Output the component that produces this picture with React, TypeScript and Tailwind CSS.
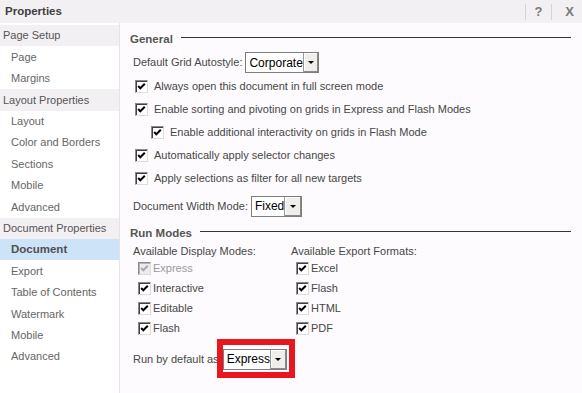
import React from "react";

const FONT = { fontFamily: '"Liberation Sans", Arial, sans-serif' };

const SIDEBAR = [
  { label: "Page Setup", group: true },
  { label: "Page" },
  { label: "Margins" },
  { label: "Layout Properties", group: true },
  { label: "Layout" },
  { label: "Color and Borders" },
  { label: "Sections" },
  { label: "Mobile" },
  { label: "Advanced" },
  { label: "Document Properties", group: true },
  { label: "Document", active: true },
  { label: "Export" },
  { label: "Table of Contents" },
  { label: "Watermark" },
  { label: "Mobile" },
  { label: "Advanced" },
];

function Check({ checked = true, disabled = false }: { checked?: boolean; disabled?: boolean }) {
  return (
    <span
      className={
        "relative w-[13px] h-[13px] shrink-0 border border-t-[#8a8a8a] border-l-[#8a8a8a] border-r-[#dcdcdc] border-b-[#dcdcdc] " +
        (disabled ? "bg-[#ececec] shadow-[inset_1px_1px_0_#b4b4b4]" : "bg-white shadow-[inset_1px_1px_0_#404040]")
      }
    >
      {checked && (
        <svg viewBox="0 0 11 11" className="absolute left-0 top-0 w-[11px] h-[11px]">
          <polyline
            points="2.2,5 4.3,7.3 8.8,2.8"
            fill="none"
            stroke={disabled ? "#a8a8a8" : "#000"}
            strokeWidth="2"
          />
        </svg>
      )}
    </span>
  );
}

function CheckRow({ label, indent = false }: { label: string; indent?: boolean }) {
  return (
    <div className={"h-[23px] flex items-center gap-[6px] " + (indent ? "pl-[18px]" : "pl-[2px]")}>
      <Check />
      <span>{label}</span>
    </div>
  );
}

function SmallCheck({ label, disabled = false }: { label: string; disabled?: boolean }) {
  return (
    <div className="h-[20px] flex items-center gap-[2px]">
      <Check disabled={disabled} />
      <span className={disabled ? "text-[#9a9a9a]" : ""}>{label}</span>
    </div>
  );
}

function Dropdown({ value, w, btn = "w-[21px]" }: { value: string; w: string; btn?: string }) {
  return (
    <div className={"flex h-[21px] border border-[#7d7d7d] bg-white " + w}>
      <span className="flex-1 flex items-center pl-[3px] text-[12px] text-black whitespace-nowrap">{value}</span>
      <span className={"flex items-center justify-center bg-[#efeeea] border-l border-[#9a9a9a] shadow-[inset_-1px_-1px_0_#8a8a8a,inset_1px_1px_0_#fff] " + btn}>
        <span className="w-0 h-0 border-l-[3px] border-r-[3px] border-t-[3px] border-l-transparent border-r-transparent border-t-black" />
      </span>
    </div>
  );
}

function Heading({ title }: { title: string }) {
  return (
    <div className="h-[20px] flex items-center gap-[8px] -ml-[3px]">
      <span className="font-bold text-[#555] text-[11.5px]">{title}</span>
      <span className="flex-1 h-px bg-[#333] mb-[6px] mr-[11px]" />
    </div>
  );
}

export default function App() {
  return (
    <div style={FONT} className="w-[582px] h-[393px] flex flex-col bg-[#f3f0f3] text-[11px] overflow-hidden">
      {/* title bar */}
      <div className="h-[23px] flex items-center justify-between pl-[5px] pr-[8px]">
        <span className="font-bold text-[11.5px] text-[#3e3e3e]">Properties</span>
        <div className="flex items-center h-[16px] text-[#7a7a7a] font-bold text-[13px]">
          <span className="w-px h-[16px] bg-[#d6d4d6]" />
          <span className="w-[25px] text-center">?</span>
          <span className="w-px h-[16px] bg-[#d6d4d6]" />
          <span className="w-[22px] text-right">X</span>
        </div>
      </div>

      <div className="flex flex-1">
        {/* sidebar */}
        <div className="w-[119px] flex flex-col pt-[2px] bg-white">
          {SIDEBAR.map((s, i) => (
            <div
              key={i}
              className={
                "h-[21.4px] flex items-center whitespace-nowrap " +
                (s.group
                  ? "pl-[3px] bg-[#f3f0f3] text-[#555]"
                  : s.active
                  ? "pl-[11px] bg-[#cde3f8] text-[#505050] font-bold text-[11.5px]"
                  : "pl-[11px] text-[#666]")
              }
            >
              {s.label}
            </div>
          ))}
          <div className="flex-1" />
        </div>

        {/* content */}
        <div className="relative flex-1 bg-[#fdfbfd] border-l border-[#e6e3e6] pl-[13px] pt-[7px] text-[#474747]">
          <Heading title="General" />
          <div className="h-[25px] flex items-center gap-[3px]">
            <span>Default Grid Autostyle:</span>
            <Dropdown value="Corporate" w="w-[74px]" />
          </div>
          <CheckRow label="Always open this document in full screen mode" />
          <CheckRow label="Enable sorting and pivoting on grids in Express and Flash Modes" />
          <CheckRow label="Enable additional interactivity on grids in Flash Mode" indent />
          <CheckRow label="Automatically apply selector changes" />
          <CheckRow label="Apply selections as filter for all new targets" />
          <div className="h-[22px] mt-[5px] flex items-center gap-[3px]">
            <span>Document Width Mode:</span>
            <Dropdown value="Fixed" w="w-[51px]" />
          </div>

          <div className="mt-[7px]">
            <Heading title="Run Modes" />
          </div>
          <div className="flex">
            <div className="w-[158px]">
              <div className="h-[14px] flex items-center">Available Display Modes:</div>
              <div className="pl-[5px]">
                <SmallCheck label="Express" disabled />
                <SmallCheck label="Interactive" />
                <SmallCheck label="Editable" />
                <SmallCheck label="Flash" />
              </div>
            </div>
            <div>
              <div className="h-[14px] flex items-center">Available Export Formats:</div>
              <div className="pl-[5px]">
                <SmallCheck label="Excel" />
                <SmallCheck label="Flash" />
                <SmallCheck label="HTML" />
                <SmallCheck label="PDF" />
              </div>
            </div>
          </div>

          <div className="h-[24px] mt-[9px] flex items-center gap-[4px]">
            <span>Run by default as</span>
            <Dropdown value="Express" w="w-[64px]" btn="w-[18px]" />
          </div>
          {/* red annotation box */}
          <div className="absolute left-[97px] top-[316px] w-[78px] h-[39px] border-[6px] border-[#e8161e]" />
        </div>
      </div>
    </div>
  );
}
